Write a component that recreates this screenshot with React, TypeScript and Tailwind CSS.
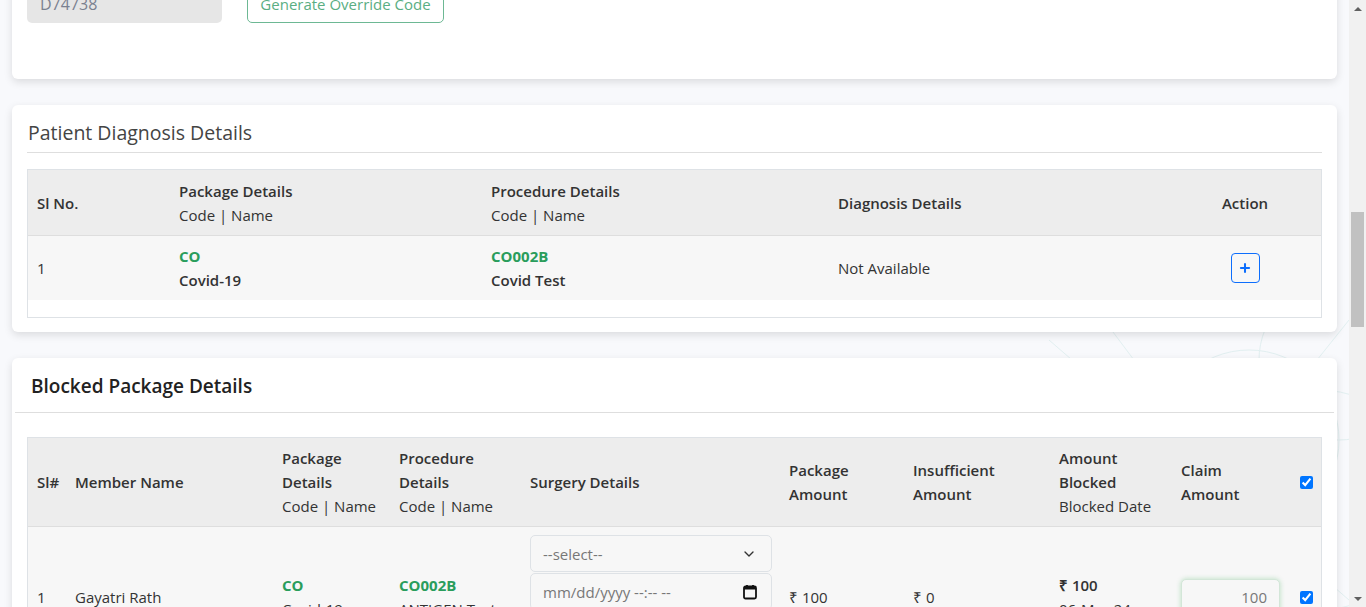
import { ChevronDown, Plus } from "lucide-react";

function Scrollbar() {
  return (
    <div className="flex w-[17px] shrink-0 flex-col items-center bg-[#f1f1f1]">
      <div className="flex h-[17px] items-center justify-center">
        <div className="h-0 w-0 border-x-[4px] border-b-[4px] border-x-transparent border-b-[#606060]" />
      </div>
      <div className="h-[195px]" />
      <div className="h-[115px] w-[13px] bg-[#c1c1c1]" />
      <div className="flex-1" />
      <div className="flex h-[17px] items-center justify-center">
        <div className="h-0 w-0 border-x-[4px] border-t-[4px] border-x-transparent border-t-[#606060]" />
      </div>
    </div>
  );
}

function Pattern() {
  return (
    <svg className="pointer-events-none absolute right-0 top-[300px] h-[320px] w-[320px]" viewBox="0 0 320 320" fill="none">
      <g stroke="#d4eaea" strokeWidth="1" opacity="0.6">
        <circle cx="140" cy="170" r="110" />
        <circle cx="220" cy="140" r="90" />
        <circle cx="290" cy="200" r="110" />
        <circle cx="310" cy="60" r="80" />
        <path d="M20 40 L320 300 M60 0 L300 320 M320 20 L80 320" />
      </g>
    </svg>
  );
}

function Calendar() {
  return (
    <svg width="14" height="16" viewBox="0 0 14 16" fill="none">
      <rect x="1" y="2.5" width="12" height="12" rx="1.5" stroke="#111" strokeWidth="1.8" />
      <rect x="1" y="2.5" width="12" height="3" fill="#111" />
      <path d="M4 1v3M10 1v3" stroke="#111" strokeWidth="1.8" />
    </svg>
  );
}

export default function App() {
  return (
    <div className="flex h-[607px] w-[1366px] overflow-hidden bg-[#f8f9fc] font-['Open_Sans',sans-serif] text-[15px] leading-[24px] text-[#333]">
      <div className="relative flex-1 overflow-hidden">
        <Pattern />
        <div className="relative -mt-[30px] flex flex-col gap-[26px] px-[12px]">
          {/* override card */}
          <div className="rounded-[6px] bg-white px-[15px] pb-[56px] pt-[15px] shadow-[0_3px_8px_rgba(0,0,0,0.12)]">
            <div className="flex gap-[25px]">
              <div className="flex h-[38px] w-[195px] items-center rounded-[5px] bg-[#e6e6e6] px-[13px] text-[16px] text-[#7a8190]">
                D74738
              </div>
              <div className="flex h-[38px] w-[197px] items-center justify-center rounded-[5px] border border-[#6db894] text-[15px] text-[#5aae83]">
                Generate Override Code
              </div>
            </div>
          </div>

          {/* diagnosis card */}
          <div className="rounded-[6px] bg-white px-[15px] pb-[14px] pt-[14px] shadow-[0_3px_8px_rgba(0,0,0,0.12)]">
            <div className="border-b border-[#dedede] pb-[5px] pl-[1px] text-[19.5px] leading-[28px] font-medium text-[#444]">
              Patient Diagnosis Details
            </div>
            <div className="mt-[16px] border border-[#dee2e6]">
              <div className="grid grid-cols-[142px_312px_347px_339px_154px] items-center border-b border-[#dedede] bg-[#ededed] pb-[8px] pt-[9px] text-[#333]">
                <div className="px-[9px] font-semibold">Sl No.</div>
                <div className="px-[9px]">
                  <div className="font-semibold">Package Details</div>
                  <div>Code | Name</div>
                </div>
                <div className="px-[9px]">
                  <div className="font-semibold">Procedure Details</div>
                  <div>Code | Name</div>
                </div>
                <div className="px-[9px] font-semibold">Diagnosis Details</div>
                <div className="text-center font-semibold">Action</div>
              </div>
              <div className="grid grid-cols-[142px_312px_347px_339px_154px] items-center bg-[#f7f7f7] py-[8px]">
                <div className="px-[9px]">1</div>
                <div className="px-[9px]">
                  <div className="font-bold text-[#2a9d5c]">CO</div>
                  <div className="font-semibold">Covid-19</div>
                </div>
                <div className="px-[9px]">
                  <div className="font-bold text-[#2a9d5c]">CO002B</div>
                  <div className="font-semibold">Covid Test</div>
                </div>
                <div className="px-[9px]">Not Available</div>
                <div className="flex justify-center">
                  <div className="flex h-[30px] w-[29px] items-center justify-center rounded-[4px] border border-[#0d6efd] text-[#0d6efd]">
                    <Plus size={14} strokeWidth={3.5} />
                  </div>
                </div>
              </div>
              <div className="h-[17px]" />
            </div>
          </div>

          {/* blocked package card */}
          <div className="rounded-[6px] bg-white pb-[20px] shadow-[0_3px_8px_rgba(0,0,0,0.12)]">
            <div className="mx-[3px] flex h-[55px] items-center border-b border-[#dedede] pl-[16px] pt-[2px] text-[19px] font-semibold text-[#222]">
              Blocked Package Details
            </div>
            <div className="px-[15px] pt-[24px]">
              <div className="border border-[#dee2e6]">
                <div className="grid grid-cols-[38px_207px_117px_131px_259px_124px_146px_122px_119px_31px] items-center border-b border-[#dedede] bg-[#ededed] py-[8px] text-[#333]">
                  <div className="pl-[9px] font-semibold">Sl#</div>
                  <div className="pl-[9px] font-semibold">Member Name</div>
                  <div className="pl-[9px]">
                    <div className="font-semibold">Package</div>
                    <div className="font-semibold">Details</div>
                    <div>Code | Name</div>
                  </div>
                  <div className="pl-[9px]">
                    <div className="font-semibold">Procedure</div>
                    <div className="font-semibold">Details</div>
                    <div>Code | Name</div>
                  </div>
                  <div className="pl-[9px] font-semibold">Surgery Details</div>
                  <div className="pl-[9px] font-semibold">
                    <div>Package</div>
                    <div>Amount</div>
                  </div>
                  <div className="pl-[9px] font-semibold">
                    <div>Insufficient</div>
                    <div>Amount</div>
                  </div>
                  <div className="pl-[9px]">
                    <div className="font-semibold">Amount</div>
                    <div className="font-semibold">Blocked</div>
                    <div>Blocked Date</div>
                  </div>
                  <div className="pl-[9px] font-semibold">
                    <div>Claim</div>
                    <div>Amount</div>
                  </div>
                  <div className="flex pl-[9px]">
                    <input type="checkbox" defaultChecked className="h-[13px] w-[13px]" />
                  </div>
                </div>
                <div className="grid grid-cols-[38px_207px_117px_131px_259px_124px_146px_122px_119px_31px] items-center bg-[#f7f7f7] py-[8px]">
                  <div className="pl-[9px]">1</div>
                  <div className="pl-[9px]">Gayatri Rath</div>
                  <div className="pl-[9px]">
                    <div className="font-bold text-[#2a9d5c]">CO</div>
                    <div>Covid-19</div>
                  </div>
                  <div className="pl-[9px]">
                    <div className="font-bold text-[#2a9d5c]">CO002B</div>
                    <div>ANTIGEN Test</div>
                  </div>
                  <div className="flex flex-col gap-[1px] pl-[9px] pr-[8px]">
                    <div className="flex h-[37px] items-center justify-between rounded-[5px] border border-[#dee2e6] bg-[#f7f7f7] pl-[12px] pr-[14px] text-[#777]">
                      <span>--select--</span>
                      <ChevronDown size={16} strokeWidth={2} className="text-[#333]" />
                    </div>
                    <div className="flex h-[37px] items-center justify-between rounded-[5px] border border-[#dee2e6] bg-[#f7f7f7] pl-[12px] pr-[14px] text-[#777]">
                      <span>mm/dd/yyyy --:-- --</span>
                      <Calendar />
                    </div>
                    <div className="h-[48px]" />
                  </div>
                  <div className="pl-[9px]">₹ 100</div>
                  <div className="pl-[9px]">₹ 0</div>
                  <div className="pl-[9px]">
                    <div className="font-semibold">₹ 100</div>
                    <div>06-Mar-24</div>
                  </div>
                  <div className="pl-[9px]">
                    <div className="flex h-[37px] w-[99px] items-center justify-end rounded-[5px] border border-[#d3e6d8] bg-[#f7f7f7] pr-[12px] text-[#777] shadow-[0_0_5px_rgba(40,167,69,0.3)]">
                      100
                    </div>
                  </div>
                  <div className="flex pl-[9px]">
                    <input type="checkbox" defaultChecked className="h-[13px] w-[13px]" />
                  </div>
                </div>
              </div>
            </div>
          </div>
        </div>
      </div>
      <Scrollbar />
    </div>
  );
}
